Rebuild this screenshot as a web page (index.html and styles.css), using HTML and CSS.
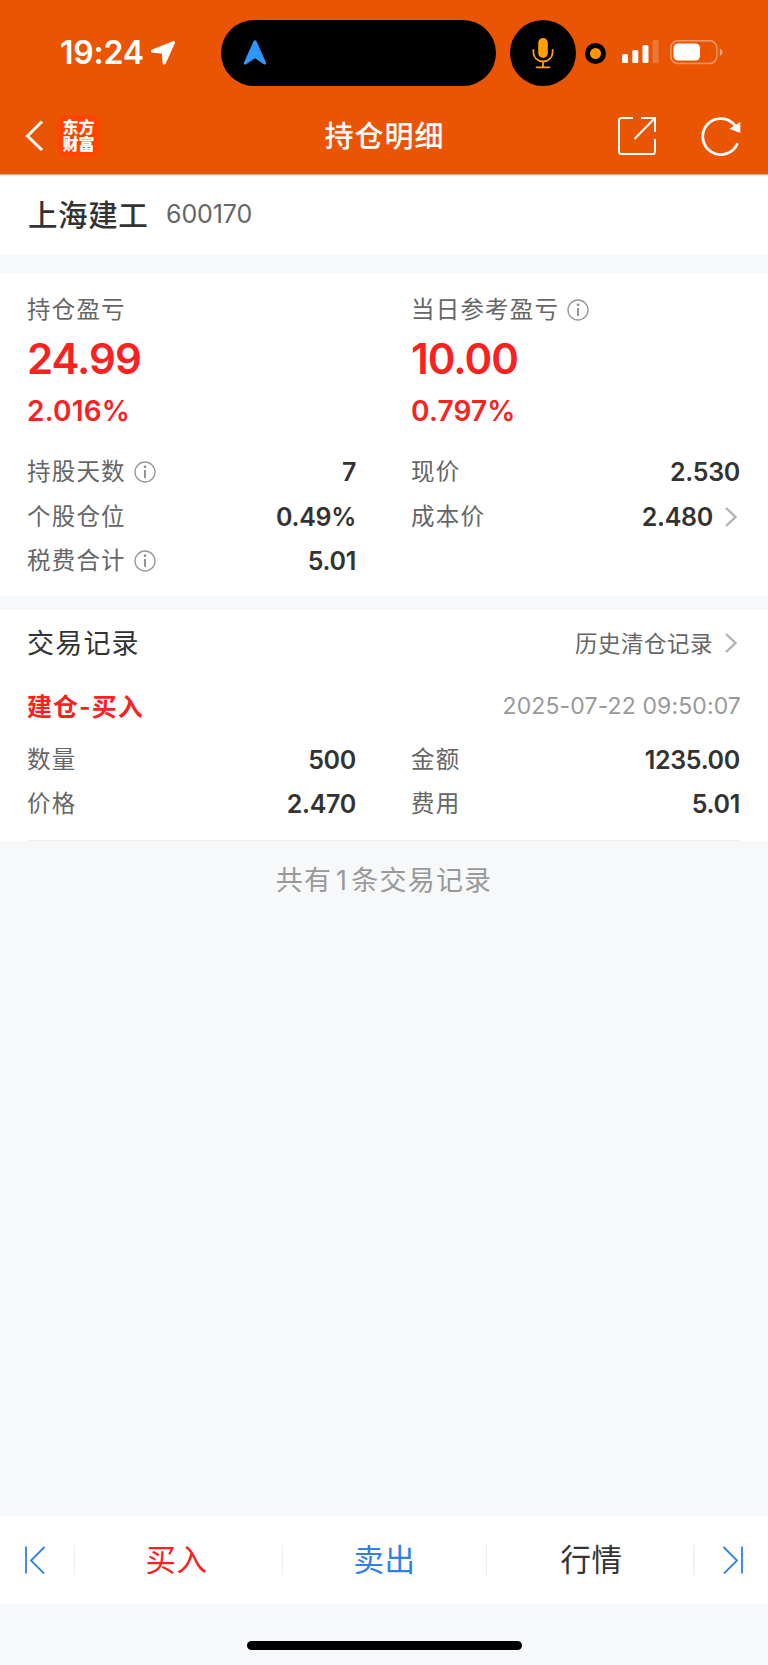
FILE: index.html
```html
<!DOCTYPE html>
<html lang="zh-CN">
<head>
    <meta charset="UTF-8">
    <meta name="viewport" content="width=device-width, initial-scale=1.0">
    <title>持仓明细</title>
    <link rel="stylesheet" href="styles.css">
</head>
<body>
    <header class="header">
        <div class="status-bar">
            <span class="time">19:24</span>
            <svg class="location" width="26" height="26" viewBox="0 0 26 26"><path d="M22.8 1.2 2.2 9.6c-1.8.8-1.6 3 .3 3.2l8.7.7c.5 0 .8.3.8.8l.6 8.7c.2 1.9 2.400 2.200 3.200.400l9-20.200c.7-1.400-.6-2.600-2-2z" fill="#fff"/></svg>
            <div class="island">
                <svg width="24" height="26" viewBox="0 0 24 26"><path d="M10.500 1.300 1 22.500c-.6 1.700.8 2.700 2.200 1.700L12 18.200l8.800 6c1.400 1 2.800 0 2.200-1.700L13.500 1.300c-.6-1.500-2.400-1.500-3 0z" fill="#2f96ff"/></svg>
            </div>
            <div class="mic">
                <svg width="22" height="32" viewBox="0 0 22 32" fill="none" stroke="#ff9f0a" stroke-width="1.800" stroke-linecap="round"><rect x="6.200" y="1" width="9.600" height="20" rx="4.800" fill="#ff9f0a" stroke="none"/><path d="M1.400 13v2.500a9.600 9 0 0 0 19.200 0V13M11 24.500V30M4.500 30.300h13"/></svg>
            </div>
            <div class="record-dot"></div>
            <svg class="signal" width="37" height="24" viewBox="0 0 37 24" fill="#fff"><rect x="0" y="14" width="6" height="9" rx="1.500"/><rect x="10.300" y="10" width="6" height="13" rx="1.500"/><rect x="20.500" y="5" width="6" height="18" rx="1.500"/><rect x="30.600" y="0" width="6" height="23" rx="1.500" opacity=".2"/></svg>
            <svg class="battery" width="54" height="25" viewBox="0 0 54 25"><rect x=".8" y=".8" width="46" height="22.600" rx="7" fill="none" stroke="#fff" stroke-opacity=".4" stroke-width="1.500"/><rect x="3.500" y="3.500" width="26.500" height="17" rx="4.500" fill="#fff"/><path d="M49.800 8.500c3.600 1.400 3.600 6 0 7.400z" fill="#fff" fill-opacity=".45"/></svg>
        </div>
        <nav class="nav">
            <div class="nav-left">
                <svg width="20" height="32" viewBox="0 0 20 32"><path d="M17 1.500 2.500 16 17 30" fill="none" stroke="#fff" stroke-width="3"/></svg>
                <div class="logo">东方<br>财富</div>
            </div>
            <h1 class="title">持仓明细</h1>
            <div class="nav-right">
                <svg width="40" height="40" viewBox="0 0 40 40" fill="none" stroke="#fff" stroke-width="2"><path d="M16 2H4.500A2.500 2.500 0 0 0 2 4.500v31A2.500 2.500 0 0 0 4.500 38h31a2.500 2.500 0 0 0 2.500-2.500V23M24 2h14v14M37.500 2.500 17.500 23"/></svg>
                <svg width="42" height="40" viewBox="0 0 42 40"><path d="M37.500 27.200A18 18 0 1 1 35 9.500" fill="none" stroke="#fff" stroke-width="2.800"/><path d="M29.500 12.800 40.300 6v11z" fill="#fff"/></svg>
            </div>
        </nav>
    </header>

    <section class="stock">
        <span class="stock-name">上海建工</span>
        <span class="stock-code num">600170</span>
    </section>

    <section class="position">
        <div class="profit">
            <div class="col">
                <div class="label">持仓盈亏</div>
                <div class="amount">24.99</div>
                <div class="percent">2.016%</div>
            </div>
            <div class="col">
                <div class="label">当日参考盈亏<svg class="info" width="22" height="22" viewBox="0 0 22 22"><circle cx="11" cy="11" r="10" fill="none" stroke="#999" stroke-width="1.400"/><path d="M11 9v8" stroke="#888" stroke-width="1.800"/><circle cx="11" cy="5.800" r="1.300" fill="#888"/></svg></div>
                <div class="amount">10.00</div>
                <div class="percent">0.797%</div>
            </div>
        </div>
        <div class="rows">
            <div class="row">
                <span class="label">持股天数<svg class="info" width="22" height="22" viewBox="0 0 22 22"><circle cx="11" cy="11" r="10" fill="none" stroke="#999" stroke-width="1.400"/><path d="M11 9v8" stroke="#888" stroke-width="1.800"/><circle cx="11" cy="5.800" r="1.300" fill="#888"/></svg></span>
                <span class="value">7</span>
            </div>
            <div class="row">
                <span class="label">现价</span>
                <span class="value">2.530</span>
            </div>
            <div class="row">
                <span class="label">个股仓位</span>
                <span class="value">0.49%</span>
            </div>
            <div class="row">
                <span class="label">成本价</span>
                <span class="value">2.480</span>
                <svg class="arrow" width="12" height="20" viewBox="0 0 12 20"><path d="M1 1l9.500 9L1 19" fill="none" stroke="#b3b3b3" stroke-width="2.400"/></svg>
            </div>
            <div class="row">
                <span class="label">税费合计<svg class="info" width="22" height="22" viewBox="0 0 22 22"><circle cx="11" cy="11" r="10" fill="none" stroke="#999" stroke-width="1.400"/><path d="M11 9v8" stroke="#888" stroke-width="1.800"/><circle cx="11" cy="5.800" r="1.300" fill="#888"/></svg></span>
                <span class="value">5.01</span>
            </div>
        </div>
    </section>

    <section class="records">
        <div class="records-head">
            <h2 class="records-title">交易记录</h2>
            <span class="history">历史清仓记录</span>
            <svg class="arrow" width="12" height="20" viewBox="0 0 12 20"><path d="M1 1l9.500 9L1 19" fill="none" stroke="#b3b3b3" stroke-width="2.400"/></svg>
        </div>
        <div class="record">
            <div class="record-head">
                <span class="record-type">建仓-买入</span>
                <span class="record-time">2025-07-22 09:50:07</span>
            </div>
            <div class="rows">
                <div class="row">
                    <span class="label">数量</span>
                    <span class="value">500</span>
                </div>
                <div class="row">
                    <span class="label">金额</span>
                    <span class="value">1235.00</span>
                </div>
                <div class="row">
                    <span class="label">价格</span>
                    <span class="value">2.470</span>
                </div>
                <div class="row">
                    <span class="label">费用</span>
                    <span class="value">5.01</span>
                </div>
            </div>
        </div>
    </section>
    <p class="total">共有<span class="count">1</span>条交易记录</p>

    <footer class="footer">
        <div class="tabs">
            <div class="tab-side prev">
                <svg width="22" height="28" viewBox="0 0 22 28" fill="none" stroke="#2f80e8" stroke-width="1.800"><path d="M2 .5v27M20.500 1 7 14.500 20 27.500"/></svg>
            </div>
            <div class="tab buy">买入</div>
            <div class="tab sell">卖出</div>
            <div class="tab quote">行情</div>
            <div class="tab-side next">
                <svg width="22" height="28" viewBox="0 0 22 28" fill="none" stroke="#2f80e8" stroke-width="1.800"><path d="M20 .5v27M1.500 1 15 14.500 2 27.500"/></svg>
            </div>
        </div>
        <div class="home-bar"></div>
    </footer>
</body>
</html>
```
FILE: styles.css
```css
* {
    box-sizing: border-box;
}

body {
    display: flex;
    flex-direction: column;
    height: 1665px;
    margin: 0;
    background-color: #f7f8fa;
    color: #333;
    font-family: Inter, "Noto Sans CJK SC", sans-serif;
}

h1, h2, p {
    margin: 0;
    font-weight: 400;
}

svg {
    display: block;
    flex: none;
}

.header {
    height: 175px;
    background-color: #ea5504;
    border-bottom: 1px solid #f4a179;
    color: #fff;
}

.status-bar {
    display: flex;
    align-items: center;
    height: 86px;
    padding: 20px 0 0 60px;
}

.time {
    width: 90px;
    padding-bottom: 1px;
    font-size: 32px;
    font-weight: 600;
    letter-spacing: -0.2px;
}

.island {
    display: flex;
    align-items: center;
    width: 275px;
    height: 66px;
    margin-left: 45px;
    padding-left: 22px;
    border-radius: 33px;
    background-color: #000;
}

.mic {
    display: flex;
    align-items: center;
    justify-content: center;
    width: 66px;
    height: 66px;
    margin-left: 14px;
    border-radius: 50%;
    background-color: #000;
}

.record-dot {
    width: 21px;
    height: 21px;
    margin-left: 9px;
    border: 5px solid #000;
    border-radius: 50%;
    background-color: #ff9500;
}

.signal {
    margin: 0 11px 3px 16px;
}

.battery {
    margin-bottom: 2px;
}

.nav {
    display: grid;
    grid-template-columns: 1fr auto 1fr;
    align-items: center;
    height: 88px;
    padding: 11px 26px 0 25px;
}

.nav-left {
    display: flex;
    align-items: center;
    gap: 12px;
}

.logo {
    width: 43px;
    height: 42px;
    padding-top: 4px;
    border-radius: 9px;
    background-color: #ff4400;
    font-size: 16px;
    font-weight: 900;
    line-height: 17px;
    text-align: center;
}

.title {
    padding: 0 0 3px 2px;
    font-size: 29px;
    font-weight: 500;
    letter-spacing: 1px;
}

.nav-right {
    display: flex;
    justify-content: flex-end;
    gap: 43px;
}

.stock {
    display: flex;
    align-items: center;
    height: 80px;
    padding: 0 28px 4px;
    background-color: #fff;
}

.stock-name {
    width: 138px;
    font-size: 29.5px;
    font-weight: 500;
    letter-spacing: 0.6px;
}

.stock-code {
    padding-top: 2px;
    color: #666;
    font-size: 25px;
    letter-spacing: -0.1px;
}

.position {
    height: 323px;
    margin-top: 18px;
    padding: 15px 28px 0 27px;
    background-color: #fff;
}

.profit,
.rows {
    display: grid;
    grid-template-columns: 329px 329px;
    column-gap: 55px;
}

.label {
    display: flex;
    align-items: center;
    color: #666;
    font-size: 23.5px;
    line-height: 44px;
    letter-spacing: 1.2px;
}

.info {
    margin-left: 8px;
}

.amount {
    color: #f82222;
    font-size: 42px;
    font-weight: 600;
    line-height: 54px;
    letter-spacing: -1px;
}

.percent {
    color: #f82222;
    font-size: 28px;
    font-weight: 600;
    line-height: 50px;
    letter-spacing: 0.2px;
}

.position .rows {
    margin-top: 14px;
}

.row {
    display: flex;
    align-items: center;
    height: 44.6px;
}

.value {
    margin-left: auto;
    font-size: 25px;
    font-weight: 600;
    letter-spacing: -0.3px;
}

.arrow {
    margin: 0 3px 0 12px;
}

.records {
    height: 231px;
    margin-top: 14px;
    background-color: #fff;
}

.records-head {
    display: flex;
    align-items: center;
    height: 66px;
    padding: 0 28px 0 27px;
}

.records-title {
    margin-right: auto;
    padding-bottom: 4px;
    font-size: 27px;
    letter-spacing: 1.2px;
}

.history {
    padding-bottom: 3px;
    color: #666;
    font-size: 22.5px;
    letter-spacing: 0.5px;
}

.record {
    height: 165px;
    margin: 0 27px;
    border-bottom: 1px solid #eee;
}

.record-head {
    display: flex;
    align-items: center;
    justify-content: space-between;
    height: 60px;
    margin-bottom: 1.5px;
}

.record-type {
    padding-bottom: 3px;
    color: #f82222;
    font-size: 25px;
    font-weight: 600;
    letter-spacing: 1px;
}

.record-time {
    color: #999;
    font-size: 23px;
    letter-spacing: 0.12px;
}

.total {
    padding-top: 20px;
    color: #999;
    font-size: 27px;
    line-height: 40px;
    letter-spacing: 1.2px;
    text-align: center;
}

.count {
    margin: 0 3px 0 4px;
}

.footer {
    height: 149px;
    margin-top: auto;
}

.tabs {
    display: flex;
    align-items: center;
    height: 88px;
    background-color: #fff;
}

.tab {
    flex: 1;
    padding-bottom: 1px;
    border-left: 1px solid #eee;
    font-size: 30.5px;
    line-height: 29px;
    letter-spacing: 0.5px;
    text-align: center;
}

.buy {
    padding-right: 4px;
}

.quote {
    padding-left: 3px;
    border-right: 2px solid #f1f1f1;
}

.tab-side {
    display: flex;
    align-items: center;
    width: 74px;
}

.prev {
    padding-left: 24px;
}

.next {
    width: 73px;
    padding-left: 27px;
}

.buy {
    color: #f82222;
}

.sell {
    color: #2f80e8;
}

.home-bar {
    width: 275px;
    height: 9px;
    margin: 37px auto 0;
    border-radius: 5px;
    background-color: #000;
}
```
